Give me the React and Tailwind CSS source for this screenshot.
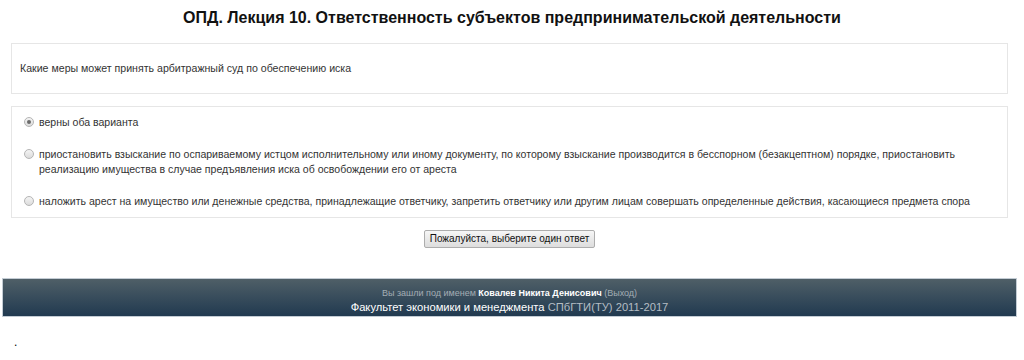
const options = [
  { text: "верны оба варианта", checked: true },
  {
    text: "приостановить взыскание по оспариваемому истцом исполнительному или иному документу, по которому взыскание производится в бесспорном (безакцептном) порядке, приостановить реализацию имущества в случае предъявления иска об освобождении его от ареста",
  },
  {
    text: "наложить арест на имущество или денежные средства, принадлежащие ответчику, запретить ответчику или другим лицам совершать определенные действия, касающиеся предмета спора",
  },
];

const Radio = ({ checked }) => (
  <span className="mt-[2px] flex h-[10px] w-[10px] shrink-0 items-center justify-center rounded-full border border-[#b5b5b5] bg-gradient-to-b from-[#f4f4f4] to-[#dcdcdc]">
    {checked && <span className="h-[4px] w-[4px] rounded-full bg-[#6b6b6b]" />}
  </span>
);

export default function App() {
  return (
    <div className="w-[1024px] h-[360px] overflow-hidden bg-white font-['Liberation_Sans',Arial,sans-serif] text-[#333]">
      <h1 className="pt-[9px] text-center text-[16px] font-bold leading-[18px] text-[#111]">
        ОПД. Лекция 10. Ответственность субъектов предпринимательской деятельности
      </h1>

      <div className="ml-[11px] mt-[16px] w-[997px]">
        <div className="flex h-[51px] items-center border border-[#e6e6e6] px-[8px] text-[10.6px]">
          Какие меры может принять арбитражный суд по обеспечению иска
        </div>

        <div className="mt-[12px] flex flex-col gap-[17px] border border-[#e6e6e6] pb-[8px] pl-[12px] pr-[6px] pt-[8px] text-[10.55px] leading-[15px]">
          {options.map((o, i) => (
            <label key={i} className="flex items-start gap-[5px]">
              <Radio checked={o.checked} />
              <span>{o.text}</span>
            </label>
          ))}
        </div>

        <div className="mt-[12px] flex justify-center">
          <button className="h-[18px] rounded-[2px] border border-[#adadad] bg-gradient-to-b from-[#f6f6f6] to-[#dddddd] px-[5px] text-[10px] leading-[14px] text-[#111]">
            Пожалуйста, выберите один ответ
          </button>
        </div>
      </div>

      <div className="ml-[2px] mt-[30px] w-[1015px] border border-[#c3ccd4] bg-gradient-to-b from-[#4f5f67] to-[#213a50] pb-[1px] pt-[7px] text-center">
        <div className="text-[9px] leading-[14px] text-[#a3adb4]">
          Вы зашли под именем <span className="font-bold text-white">Ковалев Никита Денисович</span> (Выход)
        </div>
        <div className="text-[11.2px] leading-[15px] text-[#b4bdc4]">
          <span className="text-white">Факультет экономики и менеджмента</span> СПбГТИ(ТУ) 2011-2017
        </div>
      </div>

      <div className="ml-[14px] mt-[18px] text-[12px] leading-[14px] text-black">.</div>
    </div>
  );
}
